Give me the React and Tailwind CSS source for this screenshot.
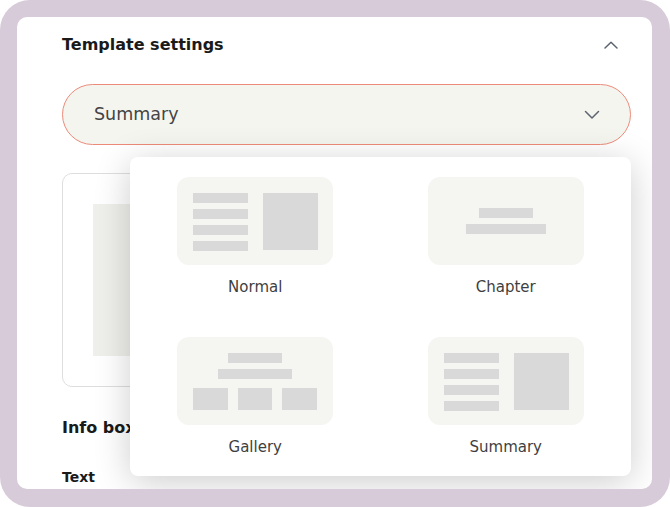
import React from "react";

const Bar = ({ className }) => <div className={`bg-[#d9d9d9] ${className}`} />;

function ThumbNormal() {
  return (
    <div className="flex h-[88px] w-[156px] gap-[15px] rounded-[12px] bg-[#f5f5f1] pl-[16px] pt-[16px]">
      <div className="flex w-[55px] flex-col gap-[6px]">
        <Bar className="h-[10px] w-full" />
        <Bar className="h-[10px] w-full" />
        <Bar className="h-[10px] w-full" />
        <Bar className="h-[10px] w-full" />
      </div>
      <Bar className="h-[57px] w-[55px]" />
    </div>
  );
}

function ThumbChapter() {
  return (
    <div className="flex h-[88px] w-[156px] flex-col items-center justify-center gap-[6px] rounded-[12px] bg-[#f5f5f1]">
      <Bar className="h-[10px] w-[54px]" />
      <Bar className="h-[10px] w-[80px]" />
    </div>
  );
}

function ThumbGallery() {
  return (
    <div className="flex h-[88px] w-[156px] flex-col items-center rounded-[12px] bg-[#f5f5f1] pt-[16px]">
      <Bar className="h-[10px] w-[54px]" />
      <Bar className="mt-[6px] h-[10px] w-[74px]" />
      <div className="mt-[9px] flex gap-[10px]">
        <Bar className="h-[22px] w-[35px]" />
        <Bar className="h-[22px] w-[34px]" />
        <Bar className="h-[22px] w-[35px]" />
      </div>
    </div>
  );
}

function Option({ label, children }) {
  return (
    <div className="flex flex-col items-center">
      {children}
      <div className="mt-[13px] text-[15px] leading-[18px] text-[#3f3f3f] [font-family:'DejaVu_Sans',sans-serif]">
        {label}
      </div>
    </div>
  );
}

const Chevron = ({ up }) => (
  <svg width="16" height="10" viewBox="0 0 16 10" fill="none">
    <path
      d={up ? "M2 8 L8 2.2 L14 8" : "M1.5 1.5 L8 8 L14.5 1.5"}
      stroke="#5d6470"
      strokeWidth="1.5"
      strokeLinecap="round"
      strokeLinejoin="round"
    />
  </svg>
);

export default function App() {
  return (
    <div className="h-[507px] w-[670px] bg-white">
      <div className="h-full rounded-[30px] bg-[#d7cad9] pt-[17px] pl-[17px] pr-[18px] pb-[18px]">
        <div className="relative h-full overflow-hidden rounded-[10px] bg-white pl-[45px] pr-[21px] [font-family:'DejaVu_Sans',sans-serif]">
          <div className="flex h-[54px] items-center justify-between pt-[2px] pr-[12px]">
            <div className="text-[16px] font-bold text-[#1a1a1a]">Template settings</div>
            <Chevron up />
          </div>
          <div className="mt-[13px] flex h-[61px] items-center justify-between rounded-full border-[1.5px] border-[#ec8a7a] bg-[#f5f5f0] pl-[31px] pr-[30px]">
            <div className="text-[17.5px] text-[#444]">Summary</div>
            <Chevron />
          </div>
          <div className="mt-[28px] h-[214px] rounded-[10px] border border-[#dedede] p-[30px]">
            <div className="h-full bg-[#efefeb]" />
          </div>
          <div className="mt-[29px] text-[16px] font-bold text-[#1a1a1a]">Info box</div>
          <div className="mt-[27px] text-[14px] font-semibold text-[#1a1a1a]">Text</div>

          <div className="absolute left-[113px] top-[140px] grid h-[319px] w-[501px] grid-cols-2 grid-rows-[160px_1fr] rounded-[8px] bg-white pt-[20px] shadow-[0_6px_36px_rgba(0,0,0,0.2)]">
            <Option label="Normal"><ThumbNormal /></Option>
            <Option label="Chapter"><ThumbChapter /></Option>
            <Option label="Gallery"><ThumbGallery /></Option>
            <Option label="Summary"><ThumbNormal /></Option>
          </div>
        </div>
      </div>
    </div>
  );
}
